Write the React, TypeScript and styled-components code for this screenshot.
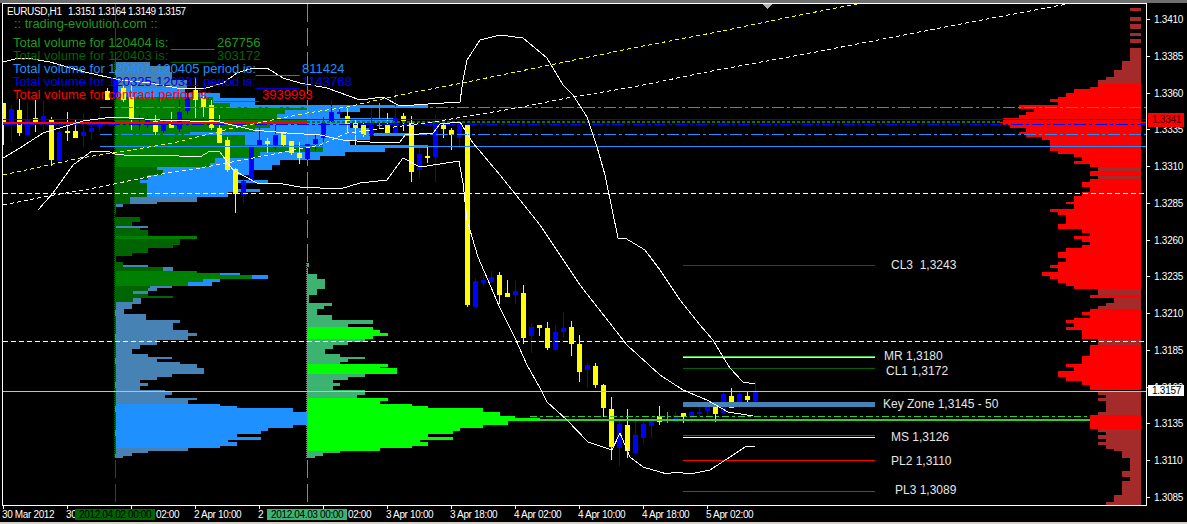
import React from 'react'
import styled, { createGlobalStyle } from 'styled-components'

const c = {
  dg: '#006400', g: '#008000', sb: '#4682b4', db: '#1e90ff', sea: '#3cb371', lime: '#00ff00',
  red: '#ff0000', brown: '#a52a2a', yellow: '#ffff00', blue: '#0000ff', doji: '#32cd32',
}

type Row = [number, number, number, string]
// [x, high, bodyTop, bodyBottom, low, colour]
type Candle = [number, number, number, number, number, string]

const y_ = c.yellow, b_ = c.blue, d_ = c.doji

const candles: Candle[] = [
  [3, 103, 103, 123, 145, y_], [11, 105, 109, 125, 142, b_], [19, 99, 110, 133, 136, y_], [27, 102, 119, 135, 135, b_],
  [35, 100, 118, 123, 132, y_], [43, 100, 116, 122, 130, b_], [51, 117, 119, 160, 166, y_], [59, 122, 132, 161, 161, b_],
  [67, 112, 131, 133, 141, y_], [75, 120, 131, 138, 138, y_], [83, 113, 132, 136, 147, b_], [91, 120, 128, 132, 140, b_],
  [99, 113, 123, 127, 132, b_], [107, 88, 91, 100, 100, y_], [115, 75, 80, 97, 100, b_], [123, 86, 88, 100, 102, y_],
  [131, 85, 97, 118, 130, y_], [139, 115, 122, 124, 130, b_], [147, 115, 120, 125, 128, b_], [155, 115, 121, 132, 135, y_],
  [163, 120, 124, 131, 133, b_], [171, 112, 123, 128, 128, y_], [179, 100, 112, 129, 132, b_], [187, 88, 97, 111, 115, b_],
  [195, 77, 90, 100, 118, y_], [203, 92, 98, 107, 117, y_], [211, 100, 105, 128, 130, y_], [219, 115, 128, 143, 143, y_],
  [227, 137, 140, 170, 172, y_], [235, 168, 169, 194, 213, y_], [243, 178, 181, 195, 203, b_], [251, 147, 147, 181, 181, b_],
  [259, 127, 140, 145, 145, b_], [267, 138, 141, 144, 153, y_], [275, 125, 135, 145, 150, b_], [283, 132, 133, 145, 146, y_],
  [291, 141, 141, 153, 155, y_], [299, 142, 153, 158, 164, y_], [307, 144, 144, 159, 160, b_], [315, 135, 139, 144, 151, b_],
  [323, 117, 123, 138, 142, b_], [331, 100, 112, 121, 122, b_], [339, 109, 112, 114, 114, b_], [347, 107, 116, 125, 132, y_],
  [355, 120, 123, 128, 145, y_], [363, 123, 125, 135, 137, y_], [371, 108, 123, 136, 137, b_], [379, 103, 125, 126, 128, d_],
  [387, 113, 124, 133, 133, y_], [395, 90, 118, 133, 133, b_], [403, 113, 116, 121, 131, y_], [411, 116, 123, 172, 182, y_],
  [419, 149, 154, 170, 178, b_], [427, 147, 156, 158, 163, y_], [435, 115, 123, 157, 182, b_], [443, 123, 125, 129, 138, y_],
  [451, 128, 130, 135, 150, y_], [459, 123, 123, 138, 148, b_], [467, 124, 124, 305, 307, y_], [475, 278, 281, 307, 308, b_],
  [483, 273, 280, 283, 286, b_], [491, 271, 277, 282, 283, b_], [499, 272, 275, 295, 304, y_], [507, 280, 293, 297, 297, y_],
  [515, 281, 291, 295, 304, b_], [523, 285, 293, 338, 344, y_], [531, 324, 327, 336, 353, b_], [539, 325, 325, 328, 336, y_],
  [547, 322, 328, 348, 350, y_], [555, 325, 332, 350, 350, b_], [563, 312, 328, 332, 338, b_], [571, 321, 327, 344, 356, y_],
  [579, 335, 344, 372, 382, y_], [587, 363, 365, 370, 388, b_], [595, 363, 366, 385, 388, y_], [603, 384, 385, 408, 417, y_],
  [611, 397, 409, 447, 460, y_], [619, 420, 424, 448, 466, b_], [627, 409, 425, 451, 458, y_], [635, 416, 435, 453, 453, b_],
  [643, 419, 424, 438, 444, b_], [651, 416, 420, 426, 438, b_], [659, 406, 416, 422, 425, y_], [667, 412, 419, 420, 423, d_],
  [675, 412, 415, 422, 422, b_], [683, 413, 413, 417, 423, y_], [691, 412, 412, 418, 423, b_], [699, 406, 412, 414, 417, b_],
  [707, 401, 402, 411, 417, b_], [715, 402, 403, 414, 422, y_], [723, 391, 394, 413, 413, b_], [731, 388, 396, 408, 408, y_],
  [739, 391, 394, 407, 408, b_], [747, 391, 396, 400, 404, y_], [755, 381, 391, 401, 404, b_],
]

// the period profile on 2 Apr: blue rows behind, green rows in front
const profileBack: Row[] = [
  [62, 66, 150, c.sb], [66, 72, 170, c.sb], [72, 80, 172, c.sb], [80, 88, 187, c.sb],
  [88, 93, 185, c.db], [93, 98, 220, c.db], [98, 105, 255, c.db], [105, 108, 428, c.db], [108, 112, 360, c.db],
  [112, 118, 340, c.db], [118, 123, 395, c.db], [123, 128, 350, c.db], [128, 133, 370, c.db], [133, 136, 410, c.db],
  [136, 140, 370, c.db], [140, 145, 350, c.db], [145, 148, 428, c.db], [148, 152, 385, c.db], [152, 156, 345, c.db],
  [156, 160, 320, c.db], [160, 165, 280, c.db], [165, 170, 272, c.db], [170, 175, 250, c.db], [175, 180, 235, c.db],
  [180, 183, 268, c.db], [183, 189, 233, c.db], [189, 192, 260, c.db], [192, 197, 228, c.db], [197, 202, 197, c.sb],
  [202, 204, 157, c.sb], [204, 207, 123, c.sb],
  [226, 228, 148, c.sb], [265, 267, 148, c.sb], [267, 271, 173, c.sb], [273, 275, 240, c.db], [275, 279, 268, c.db],
  [279, 282, 220, c.db], [282, 286, 212, c.db], [286, 288, 172, c.sb], [288, 291, 157, c.sb], [291, 294, 148, c.sb],
  [298, 302, 141, c.sb],
]

const profileFront: Row[] = [
  [97, 103, 213, c.g], [103, 107, 230, c.g], [107, 110, 307, c.g], [110, 114, 285, c.g], [114, 120, 277, c.g],
  [120, 124, 307, c.g], [124, 128, 270, c.g], [128, 132, 255, c.g], [132, 135, 190, c.g], [135, 145, 245, c.g],
  [145, 152, 323, c.g], [152, 158, 260, c.g], [158, 163, 215, c.g], [163, 167, 210, c.g], [167, 170, 157, c.dg],
  [170, 175, 163, c.dg], [175, 180, 148, c.dg], [180, 183, 140, c.dg], [183, 192, 147, c.dg], [192, 197, 147, c.dg],
  [197, 204, 130, c.dg],
  [217, 222, 140, c.dg], [222, 226, 132, c.dg], [228, 230, 140, c.dg], [230, 236, 148, c.dg], [236, 239, 197, c.g],
  [239, 245, 180, c.dg], [245, 248, 173, c.dg], [248, 253, 148, c.dg], [253, 256, 132, c.dg],
  [262, 267, 123, c.dg], [267, 271, 163, c.dg], [271, 273, 197, c.g], [273, 275, 220, c.g], [275, 279, 252, c.g],
  [279, 282, 203, c.g], [282, 286, 188, c.g], [286, 288, 150, c.dg], [288, 291, 148, c.dg], [291, 294, 133, c.dg],
  [294, 296, 148, c.dg], [296, 298, 173, c.dg], [298, 302, 133, c.dg],
  [302, 304, 141, c.sb], [304, 309, 132, c.sb], [309, 314, 124, c.sb], [314, 320, 146, c.sb], [320, 323, 180, c.sb],
  [323, 330, 173, c.sb], [330, 333, 188, c.sb], [333, 336, 197, c.sb], [336, 340, 188, c.sb], [340, 345, 157, c.sb],
  [345, 349, 140, c.sb], [349, 354, 132, c.sb], [354, 357, 148, c.sb], [357, 359, 172, c.sb], [359, 362, 157, c.sb],
  [362, 364, 180, c.sb], [364, 368, 197, c.sb], [368, 374, 204, c.sb], [374, 377, 172, c.sb], [377, 380, 157, c.sb],
  [380, 383, 140, c.sb], [383, 386, 148, c.sb], [386, 390, 140, c.sb], [390, 392, 165, c.sb], [392, 395, 172, c.sb],
  [395, 398, 165, c.sb], [398, 400, 197, c.sb], [400, 404, 188, c.sb],
  [404, 406, 220, c.db], [406, 408, 237, c.db], [408, 412, 293, c.db], [412, 425, 307, c.db], [425, 428, 293, c.db],
  [428, 431, 268, c.db], [431, 434, 261, c.db], [434, 437, 237, c.db], [437, 440, 261, c.db], [440, 442, 228, c.db],
  [442, 446, 237, c.db], [446, 448, 220, c.db], [448, 451, 188, c.sb], [451, 453, 148, c.sb], [453, 456, 132, c.sb],
  [456, 458, 123, c.sb],
]

const profileSecond: Row[] = [
  [263, 267, 309, c.sea], [274, 279, 317, c.sea], [279, 289, 325, c.sea], [289, 295, 317, c.sea], [295, 303, 309, c.sea],
  [303, 306, 332, c.sea], [306, 309, 324, c.sea], [309, 315, 317, c.sea], [315, 320, 332, c.sea], [320, 324, 373, c.sea],
  [324, 327, 348, c.sea], [327, 330, 373, c.lime], [330, 333, 380, c.lime], [333, 336, 388, c.lime], [336, 339, 373, c.lime],
  [339, 342, 365, c.sea], [342, 345, 348, c.sea], [345, 349, 333, c.sea], [349, 354, 325, c.sea], [354, 357, 340, c.sea],
  [357, 359, 365, c.sea], [359, 362, 348, c.sea], [362, 364, 340, c.sea], [364, 367, 388, c.lime], [367, 368, 380, c.lime],
  [368, 374, 397, c.lime], [374, 377, 365, c.sea], [377, 380, 348, c.sea], [380, 383, 333, c.sea], [383, 386, 340, c.sea],
  [386, 390, 333, c.sea], [390, 395, 365, c.sea], [395, 398, 357, c.sea], [398, 401, 388, c.lime], [401, 404, 380, c.lime],
  [404, 406, 412, c.lime], [406, 408, 428, c.lime], [408, 412, 483, c.lime], [412, 416, 500, c.lime], [416, 418, 515, c.lime],
  [418, 421, 540, c.lime], [421, 425, 508, c.lime], [425, 428, 483, c.lime], [428, 431, 460, c.lime], [431, 434, 453, c.lime],
  [434, 437, 428, c.lime], [437, 440, 453, c.lime], [440, 442, 420, c.lime], [442, 446, 428, c.lime], [446, 448, 412, c.lime],
  [448, 451, 380, c.lime], [451, 453, 340, c.sea], [453, 456, 323, c.sea], [456, 458, 315, c.sea],
]

// contract profile on the right edge, rows grow to the left: [top, bottom, left, colour]
const profileContract: Row[] = [
  [8, 11, 1130, c.brown], [17, 21, 1130, c.brown], [24, 29, 1130, c.brown], [33, 36, 1130, c.brown], [39, 43, 1130, c.brown],
  [48, 61, 1130, c.brown], [61, 70, 1122, c.brown], [70, 77, 1114, c.brown], [77, 80, 1106, c.brown], [80, 84, 1098, c.brown],
  [84, 87, 1098, c.red], [87, 89, 1090, c.red], [89, 93, 1074, c.red], [93, 97, 1066, c.red], [97, 99, 1058, c.red],
  [99, 102, 1050, c.red], [102, 105, 1058, c.red], [105, 109, 1019, c.red], [109, 112, 1034, c.red], [112, 115, 1026, c.red],
  [115, 118, 1019, c.red], [118, 125, 1003, c.red], [125, 128, 1010, c.red], [128, 132, 1026, c.red], [132, 134, 1019, c.red],
  [134, 137, 1026, c.red], [137, 140, 1042, c.red], [140, 151, 1050, c.red], [151, 154, 1058, c.red], [154, 157, 1074, c.red],
  [157, 161, 1082, c.red], [161, 164, 1074, c.red], [164, 167, 1090, c.red], [167, 171, 1098, c.brown], [171, 176, 1090, c.red],
  [176, 179, 1098, c.brown], [179, 182, 1090, c.red], [182, 187, 1082, c.red], [187, 192, 1090, c.red], [192, 196, 1082, c.red],
  [196, 202, 1074, c.red], [202, 204, 1066, c.red], [204, 209, 1074, c.red], [209, 212, 1050, c.red], [212, 215, 1058, c.red],
  [215, 224, 1066, c.red], [224, 229, 1058, c.red], [229, 233, 1082, c.red], [233, 236, 1090, c.red], [236, 239, 1074, c.red],
  [239, 242, 1082, c.red], [242, 245, 1090, c.red], [245, 248, 1082, c.red], [248, 252, 1066, c.red], [252, 258, 1058, c.red],
  [258, 262, 1066, c.red], [262, 265, 1058, c.red], [265, 268, 1050, c.red], [268, 272, 1058, c.red], [272, 276, 1042, c.red],
  [276, 279, 1050, c.red], [279, 283, 1058, c.red], [283, 286, 1066, c.red], [286, 289, 1074, c.red], [289, 295, 1098, c.brown],
  [295, 298, 1090, c.red], [298, 303, 1114, c.brown], [303, 306, 1106, c.brown], [306, 309, 1098, c.brown], [309, 312, 1090, c.red],
  [312, 315, 1082, c.red], [315, 318, 1090, c.red], [318, 320, 1074, c.red], [320, 323, 1066, c.red], [323, 327, 1074, c.red],
  [327, 330, 1066, c.red], [330, 339, 1082, c.red], [339, 345, 1098, c.brown], [345, 351, 1090, c.red], [351, 356, 1090, c.red],
  [356, 364, 1082, c.red], [364, 367, 1066, c.red], [367, 371, 1074, c.red], [371, 377, 1058, c.red], [377, 381, 1066, c.red],
  [381, 385, 1082, c.red], [385, 390, 1090, c.red], [392, 395, 1098, c.brown], [395, 398, 1106, c.brown], [398, 401, 1098, c.brown],
  [401, 412, 1106, c.brown], [412, 415, 1098, c.brown], [415, 429, 1090, c.red], [429, 432, 1098, c.brown], [432, 435, 1106, c.brown],
  [435, 439, 1098, c.brown], [439, 442, 1106, c.brown], [442, 445, 1098, c.brown], [445, 449, 1106, c.brown], [449, 451, 1114, c.brown],
  [451, 458, 1122, c.brown], [458, 471, 1130, c.brown], [471, 477, 1122, c.brown], [477, 481, 1130, c.brown], [481, 495, 1122, c.brown],
  [495, 502, 1114, c.brown], [502, 505, 1106, c.brown],
]

const bandUpper = '3,62 15,59 27,58 50,62 85,72 120,80 150,83 177,88 203,89 223,83 237,73 253,68 267,68 283,78 300,83 327,88 360,100 383,97 400,106 428,104 460,102 463,80 467,60 480,40 500,35 523,38 547,58 563,85 573,95 587,117 597,147 605,175 618,238 625,238 645,250 660,270 680,300 700,325 713,340 723,357 730,368 743,382 755,384'
const bandMiddle = '3,158 20,148 43,133 63,127 83,121 113,117 160,120 220,122 253,130 287,133 320,135 343,140 370,142 400,142 405,135 433,133 440,124 460,122 473,143 500,175 540,225 580,285 627,345 660,375 683,390 707,400 728,412 753,416'
const bandLower = '38,210 53,193 73,165 92,151 107,151 115,154 133,156 157,155 200,157 210,151 220,152 233,170 257,183 277,183 300,187 340,189 360,183 387,180 403,158 420,167 453,162 459,161 463,183 467,220 478,257 500,308 515,338 527,365 540,388 547,402 567,420 588,442 612,450 620,433 630,457 643,467 667,474 675,472 690,474 710,470 730,457 745,447 755,446'
const maYellow = '3,175 40,167 80,158 113,153 173,143 233,128 307,113 347,107 400,95 467,82 550,65 633,48 717,32 800,15 862,3'
const maWhite = '3,205 43,197 100,187 133,180 167,173 200,168 253,158 320,145 347,133 433,122 517,108 567,98 633,87 717,70 800,55 987,19 1067,4'

const priceTicks = ['1.3410', '1.3385', '1.3360', '1.3335', '1.3310', '1.3285', '1.3260', '1.3235', '1.3210', '1.3185', '1.3160', '1.3135', '1.3110', '1.3085']

const levels = [
  { x: 888, y: 254, text: 'CL3  1,3243' },
  { x: 881, y: 345, text: 'MR 1,3180' },
  { x: 883, y: 360, text: 'CL1 1,3172' },
  { x: 880, y: 393, text: 'Key Zone 1,3145 - 50' },
  { x: 888, y: 426, text: 'MS 1,3126' },
  { x: 888, y: 450, text: 'PL2 1,3110' },
  { x: 892, y: 479, text: 'PL3 1,3089' },
]

const legend = [
  { color: '#1f9a1f', label: 'Total volume for 120404 is:', gap: 171, value: '267756', at: 217 },
  { color: '#006400', label: 'Total volume for 120403 is:', gap: 171, value: '303172', at: 217 },
  { color: '#1e90ff', label: 'Total volume for 120401-120405 period is:', gap: 256, value: '811424', at: 302 },
  { color: '#0000ff', label: 'Total volume for 120325-120331 period is:', gap: 256, value: '1143768', at: 302 },
  { color: '#ff0000', label: 'Total volume for contract period is:', gap: 215, value: '3939993', at: 262 },
]

const timeLabels = [
  { x: 2, text: '30 Mar 2012' }, { x: 66, text: '30' }, { x: 75, text: '2012.04.02 00:00', box: c.dg },
  { x: 156, text: '02:00' }, { x: 194, text: '2 Apr 10:00' }, { x: 258, text: '2' },
  { x: 267, text: '2012.04.03 00:00', box: c.sea }, { x: 348, text: '02:00' }, { x: 386, text: '3 Apr 10:00' },
  { x: 450, text: '3 Apr 18:00' }, { x: 514, text: '4 Apr 02:00' }, { x: 578, text: '4 Apr 10:00' },
  { x: 642, text: '4 Apr 18:00' }, { x: 706, text: '5 Apr 02:00' },
]

const GlobalStyle = createGlobalStyle`
  html, body { margin: 0; padding: 0; background: #000; }
  #root { width: 1187px; height: 524px; overflow: hidden; }
`

const Screen = styled.div`
  width: 1187px;
  height: 524px;
  display: flex;
  flex-direction: column;
  background: #000;
  font-family: "Liberation Sans", Arial, sans-serif;
`
const WindowEdge = styled.div`
  height: 3px;
  flex: none;
  background: #6f6f6f;
`
const ChartRow = styled.div`
  display: flex;
  flex: none;
  height: 503px;
  padding-left: 2px;
`
const Plot = styled.div`
  position: relative;
  width: 1143px;
  height: 501px;
  flex: none;
  border: 1px solid #fff;
`
const ChartSvg = styled.svg`
  display: block;
  shape-rendering: crispEdges;
`
const Curve = styled.polyline`
  fill: none;
`
const Header = styled.div`
  position: absolute;
  left: 4px;
  top: 2px;
  display: flex;
  gap: 2.4px;
  color: #fff;
  font-size: 10px;
  line-height: 12px;
  letter-spacing: -0.5px;
  white-space: pre;
`
const HeaderSymbol = styled.span`
  letter-spacing: -0.35px;
  margin-right: 4px;
`
const Brand = styled.div`
  position: absolute;
  left: 11px;
  top: 12px;
  color: #1f9a1f;
  font-size: 12.8px;
  line-height: 15px;
  white-space: pre;
`
const Legend = styled.div`
  position: absolute;
  left: 0;
  top: 32px;
`
const LegendLine = styled.div<{ $color: string }>`
  position: relative;
  height: 13px;
  line-height: 13px;
  font-size: 13px;
  color: ${p => p.$color};
  white-space: pre;
`
const LegendPart = styled.span<{ $x: number }>`
  position: absolute;
  left: ${p => p.$x - 3}px;
  top: 0;
`
const LevelLabel = styled.div<{ $x: number; $y: number }>`
  position: absolute;
  left: ${p => p.$x}px;
  top: ${p => p.$y}px;
  color: #e6e6e6;
  font-size: 12px;
  line-height: 14px;
  white-space: pre;
`
const PriceScale = styled.div`
  position: relative;
  flex: 1;
  height: 503px;
`
const PriceTick = styled.div<{ $y: number }>`
  position: absolute;
  left: 0;
  top: ${p => p.$y}px;
  display: flex;
  align-items: center;
  gap: 4px;
  height: 12px;
  color: #fff;
  font-size: 10px;
  letter-spacing: -0.25px;
  &::before {
    content: '';
    width: 3px;
    height: 1px;
    background: #fff;
  }
`
const PriceTag = styled.div<{ $y: number; $h: number; $bg: string; $fg: string }>`
  position: absolute;
  left: 1px;
  top: ${p => p.$y}px;
  width: 36px;
  height: ${p => p.$h}px;
  line-height: ${p => p.$h}px;
  background: ${p => p.$bg};
  color: ${p => p.$fg};
  font-size: 10px;
  letter-spacing: -0.25px;
  padding-left: 4px;
  box-sizing: border-box;
`
const TimeScale = styled.div`
  position: relative;
  flex: none;
  height: 16px;
`
const TimeTick = styled.div<{ $x: number }>`
  position: absolute;
  left: ${p => p.$x}px;
  top: 0;
  width: 1px;
  height: 3px;
  background: #fff;
`
const TimeLabel = styled.div<{ $x: number; $box?: string }>`
  position: absolute;
  left: ${p => p.$x}px;
  top: 3px;
  height: 11px;
  line-height: 11px;
  padding: 0 ${p => (p.$box ? 4 : 0)}px;
  width: ${p => (p.$box ? '72px' : 'auto')};
  text-align: center;
  background: ${p => p.$box ?? 'transparent'};
  color: ${p => (p.$box ? '#000' : '#fff')};
  font-size: 10px;
  letter-spacing: -0.35px;
  white-space: pre;
`
const BottomEdge = styled.div`
  height: 2px;
  flex: none;
  background: #d4d0c8;
`

const rows = (list: Row[], from: number) =>
  list.map(([t, b, r, col], i) => <rect key={i} x={from} y={t} width={r - from} height={b - t} fill={col} />)

const Chart = () => (
  <ChartSvg width={1143} height={501} viewBox="3 4 1143 501">
    {rows(profileBack, 115)}
    {rows(profileFront, 115)}
    {rows(profileSecond, 307)}
    {profileContract.map(([t, b, l, col], i) => (
      <rect key={i} x={l} y={t} width={1141 - l} height={b - t} fill={col} />
    ))}
    <line x1={114.5} y1={62} x2={114.5} y2={458} stroke={c.dg} strokeDasharray="1 1" />
    <line x1={306.5} y1={263} x2={306.5} y2={458} stroke={c.sea} strokeDasharray="1 1" />
    <line x1={115.5} y1={4} x2={115.5} y2={505} stroke={c.dg} strokeDasharray="18 6" />
    <line x1={307.5} y1={4} x2={307.5} y2={505} stroke={c.sea} strokeDasharray="18 6" />

    {candles.map(([x, hi, top, bot, lo, col]) => (
      <g key={x} fill={col}>
        <rect x={x} y={hi} width={1} height={lo - hi} />
        <rect x={x - 2} y={top} width={5} height={Math.max(bot - top, 1)} />
      </g>
    ))}

    <rect x={683} y={402} width={192} height={5} fill={c.sb} />
    <rect x={683} y={265} width={192} height={1} fill={c.dg} />
    <rect x={683} y={356} width={192} height={1} fill="#32cd32" />
    <rect x={683} y={357} width={192} height={1} fill="#fff" />
    <rect x={683} y={368} width={192} height={1} fill={c.dg} />
    <rect x={683} y={435} width={192} height={1} fill={c.red} />
    <rect x={683} y={437} width={192} height={1} fill="#fff" />
    <rect x={683} y={460} width={192} height={1} fill={c.red} />
    <rect x={683} y={491} width={192} height={1} fill={c.red} />

    <line x1={100} y1={107.5} x2={1146} y2={107.5} stroke={c.db} strokeDasharray="12 3 3 3" />
    <line x1={100} y1={134.5} x2={1146} y2={134.5} stroke={c.db} strokeDasharray="12 3 3 3" />
    <rect x={100} y={146} width={1046} height={1} fill={c.db} />
    <rect x={3} y={119} width={1143} height={1} fill={c.blue} />
    <line x1={3} y1={124.5} x2={1146} y2={124.5} stroke={c.blue} strokeWidth={1} strokeDasharray="12 3 3 3" />
    <rect x={3} y={122} width={304} height={2} fill={c.red} />
    <line x1={307} y1={122} x2={1000} y2={122} stroke={c.g} strokeWidth={2} strokeDasharray="3 2" />
    <rect x={1000} y={122} width={146} height={1} fill={c.red} />

    <line x1={3} y1={193} x2={1146} y2={193} stroke="#fff" strokeDasharray="5 3" />
    <line x1={3} y1={341.5} x2={1146} y2={341.5} stroke="#fff" strokeDasharray="5 3" />
    <rect x={3} y={391} width={1143} height={1} fill="#c0c0c0" />

    <rect x={540} y={419} width={550} height={2} fill="#32cd32" />
    <line x1={530} y1={416.5} x2={1090} y2={416.5} stroke="#32cd32" strokeDasharray="7 3 3 3" />

    <Curve points={maYellow} stroke={c.yellow} strokeDasharray="4 3" />
    <Curve points={maWhite} stroke="#fff" strokeDasharray="4 3" />
    <Curve points={bandUpper} stroke="#fff" />
    <Curve points={bandMiddle} stroke="#fff" />
    <Curve points={bandLower} stroke="#fff" />

    <polygon points="763,4 772,4 767.5,9" fill="#b4b4b4" />
  </ChartSvg>
)

export default function App() {
  return (
    <Screen>
      <GlobalStyle />
      <WindowEdge />
      <ChartRow>
        <Plot>
          <Chart />
          <Header>
            <HeaderSymbol>EURUSD,H1</HeaderSymbol>
            <span>1.3151</span>
            <span>1.3164</span>
            <span>1.3149</span>
            <span>1.3157</span>
          </Header>
          <Brand>:: trading-evolution.com ::</Brand>
          <Legend>
            {legend.map(l => (
              <LegendLine key={l.label} $color={l.color}>
                <LegendPart $x={13}>{l.label}</LegendPart>
                <LegendPart $x={l.gap}>______</LegendPart>
                <LegendPart $x={l.at}>{l.value}</LegendPart>
              </LegendLine>
            ))}
          </Legend>
          {levels.map(l => (
            <LevelLabel key={l.text} $x={l.x} $y={l.y}>{l.text}</LevelLabel>
          ))}
        </Plot>
        <PriceScale>
          {priceTicks.map((t, i) => (
            <PriceTick key={t} $y={Math.round(10 + i * 36.77)}>{t}</PriceTick>
          ))}
          <PriceTag $y={110} $h={14} $bg="#ff0000" $fg="#400000">1.3341</PriceTag>
          <PriceTag $y={382} $h={11} $bg="#ffffff" $fg="#000000">1.3157</PriceTag>
        </PriceScale>
      </ChartRow>
      <TimeScale>
        {[3, 67, 131, 195, 259, 323, 387, 451, 515, 579, 643, 707].map(x => (
          <TimeTick key={x} $x={x} />
        ))}
        {timeLabels.map(l => (
          <TimeLabel key={l.x} $x={l.x} $box={l.box}>{l.text}</TimeLabel>
        ))}
      </TimeScale>
      <BottomEdge />
    </Screen>
  )
}
